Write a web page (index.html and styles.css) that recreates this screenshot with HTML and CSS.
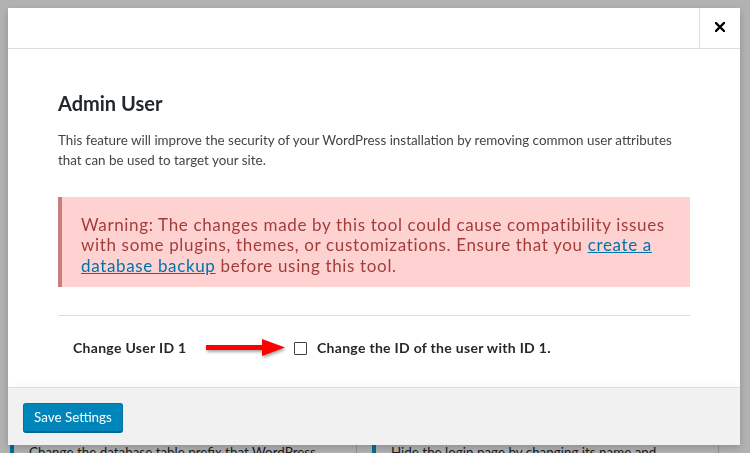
FILE: index.html
```html
<!DOCTYPE html>
<html lang="en">
<head>
    <meta charset="UTF-8">
    <meta name="viewport" content="width=device-width, initial-scale=1.0">
    <title>Admin User</title>
    <link rel="stylesheet" href="styles.css">
</head>
<body>
    <div class="page">
        <div class="cards">
            <div class="card">
                <p>Change the database table prefix that WordPress uses.</p>
            </div>
            <div class="card">
                <p>Hide the login page by changing its name and location.</p>
            </div>
        </div>
    </div>

    <div class="backdrop"></div>

    <div class="modal">
        <div class="modal-header">
            <button class="close" aria-label="Close">
                <svg width="10" height="10" viewBox="0 0 10 10">
                    <path d="M1 1 L9 9 M9 1 L1 9" stroke="#000" stroke-width="2.3" stroke-linecap="square"/>
                </svg>
            </button>
        </div>

        <div class="modal-body">
            <h2>Admin User</h2>
            <p class="desc">This feature will improve the security of your WordPress installation by removing common user attributes that can be used to target your site.</p>

            <div class="notice">
                Warning: The changes made by this tool could cause compatibility issues with some plugins, themes, or customizations. Ensure that you <a href="#">create a database backup</a> before using this tool.
            </div>

            <hr>

            <div class="field-row">
                <div class="field-label">Change User ID 1</div>
                <svg class="arrow" width="80" height="20" viewBox="0 0 80 20">
                    <rect x="0" y="7" width="58" height="5" fill="#f00"/>
                    <polygon points="56,1 79,9.5 56,18" fill="#f00"/>
                </svg>
                <label class="check">
                    <input type="checkbox">
                    Change the ID of the user with ID 1.
                </label>
            </div>
        </div>

        <div class="modal-footer">
            <button class="save">Save Settings</button>
        </div>
    </div>
</body>
</html>
```

FILE: styles.css
```css
body {
    margin: 0;
    font-family: Lato, "Open Sans", sans-serif;
    font-size: 13.4px;
    color: #444444;
    background-color: #ffffff;
}
.page {
    padding: 430px 0 0 10px;
    height: 100vh;
    box-sizing: border-box;
    overflow: hidden;
}
.cards {
    display: grid;
    grid-template-columns: 347px 347px;
    gap: 15px;
}
.card {
    background-color: #ffffff;
    border: 1px solid #d5d5d5;
    border-left: 4px solid #00a0d2;
    padding: 12px 30px 20px 15px;
}
.card p {
    margin: 0;
    line-height: 19.5px;
    color: #23282d;
}
.backdrop {
    position: fixed;
    inset: 0;
    background-color: rgba(0, 0, 0, 0.3);
}
.modal {
    position: fixed;
    top: 8px;
    left: 8px;
    width: 732px;
    height: 437px;
    display: flex;
    flex-direction: column;
    background-color: #ffffff;
    box-shadow: 0 3px 8px rgba(0, 0, 0, 0.2);
}
.modal-header {
    height: 40px;
    border-bottom: 1px solid #dddddd;
    display: flex;
    justify-content: flex-end;
}
.close {
    width: 41px;
    height: 40px;
    padding: 0;
    margin: 0;
    background: none;
    border: 0;
    border-left: 1px solid #dddddd;
    display: flex;
    align-items: center;
    justify-content: center;
    cursor: pointer;
}
.close svg {
    margin-top: -2px;
}
.modal-body {
    flex: 1;
    overflow: hidden;
    padding: 0 50px;
}
h2 {
    margin: 41px 0 0;
    font-size: 20px;
    line-height: 26px;
    font-weight: 700;
    color: #23282d;
}
.desc {
    margin: 15px 0 0;
    line-height: 19.5px;
}
.notice {
    margin-top: 27px;
    padding: 18px 20px 11px 19px;
    background-color: #ffd2d2;
    border-left: 4px solid #c97d7f;
    color: #a33d3c;
    font-size: 17px;
    letter-spacing: 0.65px;
    line-height: 20.4px;
}
.notice a {
    color: #0073aa;
}
hr {
    margin: 28px 0 0;
    border: 0;
    border-top: 1px solid #dddddd;
}
.field-row {
    margin-top: 22px;
    padding-left: 15px;
    display: flex;
    align-items: center;
    font-size: 14px;
    letter-spacing: 0.3px;
    line-height: 19.5px;
    font-weight: 700;
    color: #23282d;
}
.field-label {
    width: 133px;
    white-space: nowrap;
}
.arrow {
    margin-right: 8px;
    filter: drop-shadow(1px 2px 1.5px rgba(0, 0, 0, 0.35));
}
.check {
    display: flex;
    align-items: center;
    gap: 10px;
}
.check input {
    appearance: none;
    margin: 0;
    width: 13px;
    height: 13px;
    border: 1px solid #3a3f44;
    border-radius: 1px;
    background-color: #ffffff;
}
.modal-footer {
    border-top: 1px solid #dddddd;
    background-color: #f1f1f1;
    padding: 15px 15px 13px;
    box-shadow: 0 -6px 10px -6px rgba(0, 0, 0, 0.06);
}
.save {
    height: 29px;
    padding: 0 10px 1px;
    font-family: inherit;
    font-size: 13.4px;
    color: #ffffff;
    background-color: #0085ba;
    border: 1px solid #0073aa;
    border-bottom-color: #006799;
    border-radius: 3px;
    box-shadow: 0 1px 0 #006799;
    cursor: pointer;
}
```
